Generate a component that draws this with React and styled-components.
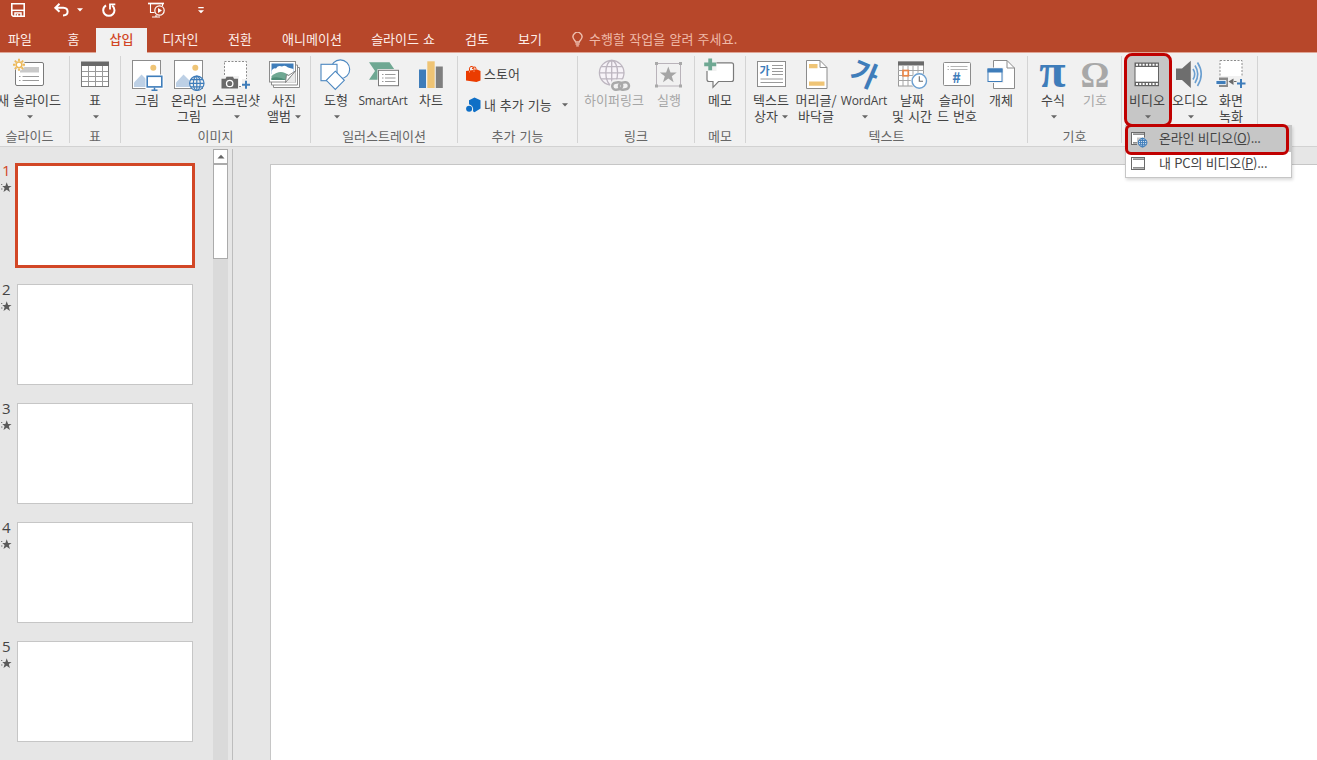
import React from 'react'
import styled, { createGlobalStyle, css } from 'styled-components'

const BLUE = '#3f7dba'
const GRAY = '#7a7a7a'
const DIM = '#a8a8a8'
const YELLOW = '#efc475'
const GREEN = '#6fa893'

/* ---------- ribbon icons, all on a 34 x 34 grid ---------- */

const Icon = ({ children }) => (
  <IconSvg width='34' height='34' viewBox='0 0 34 34' fill='none'>{children}</IconSvg>
)

const Globe = ({ x, y, r, color, bg = '#f1f1f1', w = 1.2 }) => (
  <g stroke={color} strokeWidth={w} fill='none'>
    <circle cx={x} cy={y} r={r} fill={bg} />
    <ellipse cx={x} cy={y} rx={r * 0.48} ry={r} />
    <path d={`M${x} ${y - r}V${y + r}M${x - r} ${y}H${x + r}M${x - r * 0.86} ${y - r * 0.5}H${x + r * 0.86}M${x - r * 0.86} ${y + r * 0.5}H${x + r * 0.86}`} />
  </g>
)

const NewSlideIcon = () => (
  <Icon>
    <rect x='3.5' y='4.5' width='28' height='23' rx='1.5' fill='#fff' stroke={GRAY} />
    <path d='M8 9H27V14.5H8Z' fill='#c9c9c9' />
    <path d='M7 18.5H8.5M10.5 18.5H27M7 22.5H8.5M10.5 22.5H27' stroke='#9a9a9a' />
    <circle cx='7' cy='6.8' r='6' fill='#f1f1f1' />
    <circle cx='7' cy='6.8' r='2.8' fill='#fff' stroke='#ecb95a' strokeWidth='1.4' />
    <path d='M7 .8V3.2M7 10.4V12.8M1 6.8H3.4M10.6 6.8H13M2.8 2.6L4.5 4.3M9.5 9.3L11.2 11M11.2 2.6L9.5 4.3M4.5 9.3L2.8 11' stroke='#ecb95a' strokeWidth='1.9' />
  </Icon>
)

const TableIcon = () => (
  <Icon>
    <rect x='3.5' y='4.5' width='27' height='24' fill='#fff' stroke={GRAY} />
    <path d='M3 3.5H31V8H3Z' fill='#6a6a6a' />
    <path d='M10.5 8V28M17.5 8V28M24.5 8V28M4 13.5H30M4 18.5H30M4 23.5H30' stroke='#9a9a9a' />
  </Icon>
)

const Photo = () => (
  <g>
    <rect x='2.5' y='2.5' width='28' height='28' fill='#fff' stroke='#8c8c8c' />
    <path d='M4 29V24.5L11.5 16.5L21 26V29Z' fill='#bdd0e5' />
    <circle cx='23.3' cy='9.7' r='3' fill={YELLOW} />
  </g>
)

const PictureIcon = () => (
  <Icon>
    <Photo />
    <rect x='15.5' y='16.5' width='18' height='14.5' fill='#fff' />
    <rect x='17.2' y='18.3' width='14.6' height='10.6' fill='#fff' stroke={BLUE} strokeWidth='1.6' />
    <path d='M24.5 29.5V32M21.5 32.3H27.5' stroke={BLUE} strokeWidth='1.5' />
  </Icon>
)

const OnlinePictureIcon = () => (
  <Icon>
    <Photo />
    <Globe x={24.8} y={25.3} r={7.2} color={BLUE} />
  </Icon>
)

const ScreenshotIcon = () => (
  <Icon>
    <rect x='5.5' y='3.5' width='22' height='25' fill='#fff' stroke='#8c8c8c' strokeDasharray='2 1.5' />
    <path d='M1.5 18H20V31H1.5Z' fill='#f1f1f1' />
    <path d='M23 21H33V33H23Z' fill='#f1f1f1' />
    <path d='M2.5 20.8H6.5L7.5 18.8H14L15 20.8H19V30.6H2.5Z' fill='#6a6a6a' />
    <circle cx='10.7' cy='25.5' r='3.2' fill='#6a6a6a' stroke='#fff' strokeWidth='1.3' />
    <path d='M27 22.7V30.7M23 26.7H31' stroke={BLUE} strokeWidth='2' />
  </Icon>
)

const AlbumIcon = () => (
  <Icon>
    <path d='M6.5 24V29.5H32.5V9.5H28' fill='#fff' stroke='#8c8c8c' />
    <path d='M4.5 24V27H30.5V7H28' fill='#fff' stroke='#8c8c8c' />
    <rect x='2.5' y='3.5' width='26' height='20.5' fill='#fff' stroke='#8c8c8c' />
    <path d='M4.5 5.5H26.5V16H4.5Z' fill={BLUE} />
    <path d='M4.5 13Q6 9.5 9 10.5Q11 7 15 8.5Q18 6.5 21 9.5L26.5 11V16H4.5Z' fill='#fff' />
    <path d='M4.5 22V18Q12 12 18 15L24 18V22Z' fill={GREEN} />
    <path d='M4.5 20Q12 18 19 22H4.5Z' fill='#4f8d78' />
    <path d='M19 24.5L28.5 13V24.5Z' fill='#e9e9e9' />
    <path d='M18.5 24.5L19.5 16.5L21.5 17.5L28.7 12.8Z' fill='#fff' stroke={GRAY} strokeWidth='.9' />
  </Icon>
)

const ShapesIcon = () => (
  <Icon>
    <g fill='#fff' stroke='#4b87c0' strokeWidth='1.1'>
      <circle cx='21.3' cy='11.3' r='9.4' />
      <rect x='2' y='6.3' width='16' height='16.4' />
      <path d='M16.3 13.2L25.3 22.3L16.3 31.4L7.3 22.3Z' />
    </g>
  </Icon>
)

const SmartArtIcon = () => (
  <Icon>
    <path d='M3 4.2H23.5L29.5 13L23.5 21.7H3L9 13Z' fill={GREEN} />
    <rect x='11.5' y='11' width='22' height='18' fill='#f1f1f1' />
    <rect x='12.5' y='12.3' width='20' height='15.4' fill='#fff' stroke={GRAY} />
    <path d='M16 16.5H17.5M19 16.5H29.5M16 20H17.5M19 20H29.5M16 23.5H17.5M19 23.5H29.5' stroke='#9a9a9a' />
  </Icon>
)

const ChartIcon = () => (
  <Icon>
    <path d='M5 11.5H12V30H5Z' fill={BLUE} />
    <path d='M13.3 3.3H20.7V30H13.3Z' fill={YELLOW} />
    <path d='M21.8 8.5H28.8V30H21.8Z' fill='#7f7f7f' />
  </Icon>
)

const LinkIcon = () => (
  <Icon>
    <Globe x={14.7} y={14.8} r={12.3} color='#bdb6c0' bg='#f7f3f8' w={1.3} />
    <rect x='13' y='21.5' width='21' height='12' rx='6' fill='#f1f1f1' />
    <g stroke='#a9a9a9' strokeWidth='2.5'>
      <rect x='15.2' y='24.5' width='10' height='7' rx='3.5' transform='rotate(-8 20 28)' />
      <rect x='22' y='24.5' width='10' height='7' rx='3.5' transform='rotate(-8 27 28)' />
    </g>
  </Icon>
)

const ActionIcon = () => (
  <Icon>
    <rect x='4.5' y='5.5' width='24' height='22.5' stroke='#b9b3ba' />
    <path d='M3 4H6V7H3ZM27 4H30V7H27ZM3 26.5H6V29.5H3ZM27 26.5H30V29.5H27Z' fill='#a9a9a9' />
    <path d='M16.3 8.5L18.5 14.5H24.7L19.8 18.2L21.6 24.2L16.3 20.6L11 24.2L12.8 18.2L7.9 14.5H14.1Z' fill='#a5a5a5' />
  </Icon>
)

const MemoIcon = () => (
  <Icon>
    <path d='M5.5 4.8H28.5Q30.5 4.8 30.5 6.8V21.5Q30.5 23.5 28.5 23.5H15.5L10 29.3V23.5H6Q4 23.5 4 21.5V5Z' fill='#fff' stroke={GRAY} strokeWidth='1.2' />
    <path d='M0 0H13.5V13H0Z' fill='#f1f1f1' />
    <path d='M7.2 .5V12.3M1.2 6.4H13.2' stroke={GREEN} strokeWidth='3.8' />
  </Icon>
)

const TextBoxIcon = () => (
  <Icon>
    <rect x='3.5' y='3.5' width='28' height='25' fill='#fff' stroke='#8c8c8c' />
    <Glyph x='5.5' y='16.5' $size={11} $weight={700}>가</Glyph>
    <path d='M18 7.5H29M18 10.5H29M18 13.5H29M18 16.5H29M6.5 21H29M6.5 24.5H29' stroke='#9a9a9a' />
  </Icon>
)

const HeaderIcon = () => (
  <Icon>
    <path d='M7.5 2.5H21L28 9.5V30.5H7.5Z' fill='#fff' stroke='#8c8c8c' />
    <path d='M21 2.5V9.5H28' stroke='#8c8c8c' />
    <path d='M10 6H18.5V10.3H10ZM10 23.4H25.5V27.8H10Z' fill={YELLOW} />
  </Icon>
)

const WordArtIcon = () => (
  <Icon>
    <Glyph x='17.5' y='27' $size={29} $weight={700} textAnchor='middle' transform='rotate(23 18 16)'>가</Glyph>
  </Icon>
)

const DateIcon = () => (
  <Icon>
    <rect x='3.5' y='4' width='25' height='24' fill='#fff' stroke='#9a9a9a' />
    <path d='M3 3.5H29V7.5H3Z' fill='#6a6a6a' />
    <path d='M8 8V28M13 8V28M18 8V28M23 8V28M3 12.5H29M3 17.5H29M3 22.5H29' stroke='#a5a5a5' />
    <rect x='8' y='12.5' width='5.3' height='5.3' fill='#fff' stroke='#e8874a' strokeWidth='1.7' />
    <circle cx='24.3' cy='23' r='8.6' fill='#f1f1f1' />
    <circle cx='24.3' cy='23' r='7.2' fill='#fff' stroke='#6b9fd0' strokeWidth='1.4' />
    <path d='M24.3 18.2V23.3H28' stroke='#6a6a6a' strokeWidth='1.1' />
  </Icon>
)

const NumberIcon = () => (
  <Icon>
    <rect x='3.5' y='4.5' width='27' height='23' rx='1' fill='#fff' stroke='#8c8c8c' />
    <path d='M7.5 8.5H9M10.5 8.5H27.5M7.5 11.5H9M10.5 11.5H27.5' stroke='#b5b5b5' />
    <Glyph x='12.3' y='25' $size={14.5} $weight={700}>#</Glyph>
  </Icon>
)

const ObjectIcon = () => (
  <Icon>
    <path d='M9.5 2.5H23L30.5 10V30.5H9.5Z' fill='#fff' stroke='#8c8c8c' />
    <path d='M23 2.5V10H30.5' stroke='#8c8c8c' />
    <rect x='2.5' y='9.5' width='17' height='15.5' fill='#f1f1f1' />
    <rect x='4' y='11' width='14' height='12.5' fill='#fff' stroke={BLUE} />
    <path d='M3.5 10.5H18.5V14.5H3.5Z' fill={BLUE} />
  </Icon>
)

const PiIcon = () => (
  <Icon>
    <Glyph x='16.5' y='28.5' $size={48} $weight={700} $serif textAnchor='middle'>π</Glyph>
  </Icon>
)

const OmegaIcon = () => (
  <Icon>
    <Glyph x='17' y='28.5' $size={36} $weight={700} $serif $color={DIM} textAnchor='middle'>Ω</Glyph>
  </Icon>
)

const VideoIcon = () => (
  <Icon>
    <path d='M4.5 4.5H29V28.2H4.5Z' fill='#636363' />
    <path d='M5.5 9H28V23.7H5.5Z' fill='#fff' />
    <path d='M6 6.7H28M6 26H28' stroke='#fff' strokeWidth='2' strokeDasharray='2 1.3' />
  </Icon>
)

const AudioIcon = () => (
  <Icon>
    <path d='M3 10.5H9L17.8 2.8V30L9 22H3Z' fill='#6e6e6e' />
    <path d='M20 11Q23.5 16 20 21.5M22 7.5Q27.5 16 22 25M24.5 4.5Q32 16 24.5 28' stroke='#6b9fd0' strokeWidth='1.6' />
  </Icon>
)

const RecordIcon = () => (
  <Icon>
    <rect x='6' y='2.5' width='22' height='24' fill='#fff' stroke='#8c8c8c' strokeDasharray='2 1.5' />
    <path d='M1 18H34V32H1Z' fill='#f1f1f1' />
    <path d='M5 19.5H14V29H5Z' fill='#8a8a8a' />
    <path d='M2 22.5H12V26.5H2Z' fill={BLUE} stroke='#fff' strokeWidth='.8' />
    <path d='M14.5 23.5L19.5 20.5V27Z' fill='#6a6a6a' />
    <path d='M20 23.5H22.5' stroke='#6a6a6a' />
    <path d='M27 21V30M23 25.5H31.5' stroke={BLUE} strokeWidth='2' />
  </Icon>
)

/* ---------- small icons ---------- */

const SaveIcon = () => (
  <svg width='14' height='14' viewBox='0 0 14 14' fill='none' stroke='#fff'>
    <path d='M.8 .8H13.2V13.2H2.2L.8 11.8Z' strokeWidth='1.6' />
    <path d='M1 7.3H13' strokeWidth='1.5' />
    <path d='M4 13V10H10V13' strokeWidth='1.5' />
    <path d='M6.5 11V13' strokeWidth='1.5' />
  </svg>
)

const UndoIcon = () => (
  <svg width='15' height='14' viewBox='0 0 15 14' fill='none' stroke='#fff' strokeWidth='2'>
    <path d='M5.5 .8L1.3 4.8L5.5 8.8M1.5 4.8H9.3Q13.6 5 13.6 8.8Q13.6 12.3 9 12.6' />
  </svg>
)

const RepeatIcon = () => (
  <svg width='14' height='14' viewBox='0 0 14 14' fill='none' stroke='#fff' strokeWidth='2'>
    <path d='M4 2.3Q1.2 4.2 1.2 7.2A5.6 5.6 0 0 0 12.5 7.2Q12.4 4.4 10.2 2.6' />
    <path d='M8 6.5V1.4H13.3' strokeWidth='1.8' />
  </svg>
)

const ShowIcon = () => (
  <svg width='17' height='16' viewBox='0 0 17 16' fill='none' stroke='#fff'>
    <path d='M0 1.5H16' strokeWidth='1.7' />
    <path d='M2.5 2V10.5H6.5M14.5 2V4M4 15H12M8 13V15' strokeWidth='1.1' />
    <circle cx='11.5' cy='8.5' r='4.7' strokeWidth='1.2' />
    <path d='M10 6L14 8.5L10 11Z' fill='#fff' stroke='none' />
  </svg>
)

const MoreIcon = () => (
  <svg width='6' height='7' viewBox='0 0 6 7' fill='#fff'>
    <path d='M.3 0H5.7V1.2H.3ZM0 3.2H6L3 6.2Z' />
  </svg>
)

const BulbIcon = () => (
  <svg width='11' height='15' viewBox='0 0 11 15' fill='none' stroke='#efc0b0' strokeWidth='1.4'>
    <path d='M3.6 10Q3.4 8.8 2 7.4A4.4 4.4 0 1 1 9 7.4Q7.6 8.8 7.4 10Z' />
    <path d='M3.5 12H7.5M4.2 13.9H6.8' />
  </svg>
)

const StoreIcon = () => (
  <svg width='15' height='17' viewBox='0 0 15 17' fill='none'>
    <path d='M0 6L11 4.5L14.5 6V15.5L10.5 17L0 15.5Z' fill='#eb3c00' />
    <path d='M3.5 7V3.2Q4 1 6.2 1.4Q8 1.8 8 5M6.2 4Q7 .8 9.5 2.2Q10 3 10 4.8' stroke='#eb3c00' />
    <path d='M3.5 5.8V7.5M8 5.3V7' stroke='#f6a88c' strokeWidth='.8' />
  </svg>
)

const AddinIcon = () => (
  <svg width='15' height='16' viewBox='0 0 15 16'>
    <path d='M8.5 .5L14.5 3.2V11.5L8.5 15.2L7 14.2Q8 9 3 7.3V3.2Z' fill='#0f6fc6' />
    <circle cx='3.1' cy='11.7' r='3' fill='#0f6fc6' />
  </svg>
)

const StarIcon = () => (
  <svg width='11' height='11' viewBox='0 0 11 11'>
    <path d='M5.7 .3L7.1 3.9H10.6L7.8 6.1L8.9 10L5.7 7.7L2.5 10L3.6 6.1L1.2 3.9H4.4Z' fill='#5a5a5a' />
    <path d='M0 2.5H1.3M0 7H1.5' stroke='#777' />
  </svg>
)

const FilmIcon = ({ globe }) => (
  <svg width='18' height='18' viewBox='0 0 18 18' fill='none'>
    <rect x='1.5' y='2.5' width='13' height='12' fill='#fff' stroke='#6a6a6a' />
    <path d='M3 4.2H14M3 12.8H14' stroke='#6a6a6a' strokeWidth='1.2' />
    {globe && <path d='M7 7.5H18V18H7Z' fill='#c6c6c6' />}
    {globe && <Globe x={12.6} y={12.6} r={4.3} color={BLUE} bg='#dfe9f3' w={1} />}
  </svg>
)

const Caret = ({ color = '#666' }) => (
  <svg width='6' height='4' viewBox='0 0 6 4'><path d='M0 .3H6L3 3.6Z' fill={color} /></svg>
)

/* ---------- data ---------- */

const tabs = [
  { text: '홈', w: 45 },
  { text: '삽입', w: 51, active: true },
  { text: '디자인', w: 67 },
  { text: '전환', w: 52 },
  { text: '애니메이션', w: 92 },
  { text: '슬라이드 쇼', w: 90 },
  { text: '검토', w: 58 },
  { text: '보기', w: 48 },
]

const groups = [
  { label: '슬라이드', w: 70, pad: 0, labelShift: 10, tools: [
    { icon: <NewSlideIcon />, w: 58, lines: ['새 슬라이드'], caret: true },
  ] },
  { label: '표', w: 51, pad: 4, tools: [
    { icon: <TableIcon />, w: 42, lines: ['표'], caret: true },
  ] },
  { label: '이미지', w: 190, pad: 5, tools: [
    { icon: <PictureIcon />, w: 42, lines: ['그림'] },
    { icon: <OnlinePictureIcon />, w: 42, lines: ['온라인', '그림'] },
    { icon: <ScreenshotIcon />, w: 52, lines: ['스크린샷'], caret: true },
    { icon: <AlbumIcon />, w: 44, lines: ['사진', '앨범'], caret: true },
  ] },
  { label: '일러스트레이션', w: 147, pad: 5, tools: [
    { icon: <ShapesIcon />, w: 40, lines: ['도형'], caret: true },
    { icon: <SmartArtIcon />, w: 54, lines: ['SmartArt'] },
    { icon: <ChartIcon />, w: 42, lines: ['차트'] },
  ] },
  { label: '추가 기능', w: 120, addins: true },
  { label: '링크', w: 117, pad: 4, tools: [
    { icon: <LinkIcon />, w: 64, lines: ['하이퍼링크'], off: true },
    { icon: <ActionIcon />, w: 46, lines: ['실행'], off: true },
  ] },
  { label: '메모', w: 51, pad: 4, tools: [
    { icon: <MemoIcon />, w: 42, lines: ['메모'] },
  ] },
  { label: '텍스트', w: 282, pad: 4, tools: [
    { icon: <TextBoxIcon />, w: 42, lines: ['텍스트', '상자'], caret: true },
    { icon: <HeaderIcon />, w: 48, lines: ['머리글/', '바닥글'] },
    { icon: <WordArtIcon />, w: 48, lines: ['WordArt'], caret: true },
    { icon: <DateIcon />, w: 48, lines: ['날짜', '및 시간'] },
    { icon: <NumberIcon />, w: 42, lines: ['슬라이', '드 번호'] },
    { icon: <ObjectIcon />, w: 46, lines: ['개체'] },
  ] },
  { label: '기호', w: 94, pad: 4, tools: [
    { icon: <PiIcon />, w: 42, lines: ['수식'], caret: true },
    { icon: <OmegaIcon />, w: 42, lines: ['기호'], off: true },
  ] },
  { label: '', w: 136, pad: 4, tools: [
    { icon: <VideoIcon />, w: 42, lines: ['비디오'], caret: true, open: true },
    { icon: <AudioIcon />, w: 44, lines: ['오디오'], caret: true },
    { icon: <RecordIcon />, w: 38, lines: ['화면', '녹화'] },
  ] },
]

const VideoMenu = () => (
  <Menu>
    <MenuItem $on>
      <FilmIcon globe />
      <span>온라인 비디오(<u>O</u>)...</span>
    </MenuItem>
    <MenuItem>
      <FilmIcon />
      <span>내 PC의 비디오(<u>P</u>)...</span>
    </MenuItem>
    <MenuMark />
  </Menu>
)

const RibbonTool = ({ icon, w, lines, caret, off, open }) => (
  <Tool $w={w} $off={off} $open={open}>
    {icon}
    <Line $latin={/^[A-Z]/.test(lines[0])}>{lines[0]}</Line>
    <Line $solo={!lines[1]}>
      {lines[1]}
      {caret && <Caret />}
    </Line>
    {open && <ToolMark />}
    {open && <VideoMenu />}
  </Tool>
)

const AddinTools = () => (
  <AddinList>
    <AddinRow><StoreIcon />스토어</AddinRow>
    <AddinRow><AddinIcon />내 추가 기능<Caret /></AddinRow>
  </AddinList>
)

const App = () => {
  return (
    <Window>
      <GlobalStyle />
      <TitleBar>
        <Quick $gap={29}><SaveIcon /></Quick>
        <Quick $gap={8}><UndoIcon /></Quick>
        <Quick $gap={19}><Caret color='#fff' /></Quick>
        <Quick $gap={32}><RepeatIcon /></Quick>
        <Quick $gap={33}><ShowIcon /></Quick>
        <Quick><MoreIcon /></Quick>
      </TitleBar>
      <TabBar>
        <FileTab>파일</FileTab>
        {tabs.map((tab) => (
          <Tab key={tab.text} $w={tab.w} $active={tab.active}>{tab.text}</Tab>
        ))}
        <TellMe><BulbIcon />수행할 작업을 알려 주세요.</TellMe>
      </TabBar>
      <Ribbon>
        {groups.map((group, i) => (
          <Group key={i} $w={group.w}>
            <Tools $pad={group.pad}>
              {group.addins
                ? <AddinTools />
                : group.tools.map((tool) => <RibbonTool key={tool.lines[0]} {...tool} />)}
            </Tools>
            <GroupLabel $shift={group.labelShift}>{group.label}</GroupLabel>
          </Group>
        ))}
      </Ribbon>
      <Body>
        <Slides>
          {[1, 2, 3, 4, 5].map((n) => (
            <SlideRow key={n}>
              <SlideInfo $active={n === 1}>
                <span>{n}</span>
                <StarIcon />
              </SlideInfo>
              <Thumb $active={n === 1} />
            </SlideRow>
          ))}
        </Slides>
        <ScrollBar>
          <ScrollButton>
            <svg width='8' height='5' viewBox='0 0 8 5'><path d='M.5 4.5L4 .8L7.5 4.5Z' fill='#666' /></svg>
          </ScrollButton>
          <ScrollThumb />
        </ScrollBar>
        <Editor>
          <Canvas />
        </Editor>
      </Body>
    </Window>
  )
}

const GlobalStyle = createGlobalStyle`
  * { box-sizing: border-box; }
  body {
    margin: 0;
    overflow: hidden;
    font-family: "Noto Sans CJK KR", sans-serif;
    font-size: 13px;
    word-spacing: 1px;
    color: #444;
  }
`
const Window = styled.div`
  width: 1317px;
  height: 760px;
  display: flex;
  flex-direction: column;
  overflow: hidden;
  background: #e6e6e6;
`
const TitleBar = styled.div`
  height: 28px;
  padding: 2px 0 0 11px;
  display: flex;
  background: #b7472a;
`
const Quick = styled.span`
  height: 16px;
  display: flex;
  align-items: center;
  margin-right: ${({ $gap }) => $gap || 0}px;
`
const TabBar = styled.div`
  height: 25px;
  display: flex;
  background: #b7472a;
  border-bottom: 1px solid #e0a595;
`
const Tab = styled.div`
  width: ${({ $w }) => $w}px;
  height: 25px;
  line-height: 21px;
  text-align: center;
  white-space: nowrap;
  color: #fdeee9;
  ${({ $active }) => $active && css`
    background: #f1f1f1;
    color: #d24726;
    font-weight: 500;
  `}
`
const FileTab = styled(Tab)`
  width: 40px;
  margin-right: 11px;
`
const TellMe = styled.div`
  height: 22px;
  margin-left: 18px;
  display: flex;
  align-items: center;
  gap: 6px;
  line-height: 20px;
  letter-spacing: 0.1px;
  color: #efb9a8;
`
const Ribbon = styled.div`
  height: 94px;
  flex: none;
  display: flex;
  background: #f1f1f1;
  border-bottom: 1px solid #d2d2d2;
`
const Group = styled.div`
  width: ${({ $w }) => $w}px;
  height: 87px;
  margin-top: 3px;
  flex: none;
  display: flex;
  flex-direction: column;
  border-right: 1px solid #d4d4d4;
`
const Tools = styled.div`
  height: 72px;
  flex: none;
  padding-left: ${({ $pad }) => $pad || 0}px;
  display: flex;
`
const Tool = styled.div`
  position: relative;
  width: ${({ $w }) => $w}px;
  height: 69px;
  padding-top: 2px;
  flex: none;
  display: flex;
  flex-direction: column;
  align-items: center;
  color: ${({ $off }) => ($off ? '#a6a6a6' : '#444')};
  background: ${({ $open }) => ($open ? '#c6c6c6' : 'transparent')};
`
const IconSvg = styled.svg`
  flex: none;
  overflow: visible;
`
const Glyph = styled.text`
  fill: ${({ $color }) => $color || BLUE};
  font-family: ${({ $serif }) => ($serif ? '"Liberation Serif", serif' : '"Noto Sans CJK KR", sans-serif')};
  font-size: ${({ $size }) => $size}px;
  font-weight: ${({ $weight }) => $weight};
`
const Line = styled.div`
  height: 16px;
  line-height: 16px;
  display: flex;
  align-items: center;
  gap: 4px;
  white-space: nowrap;
  svg {
    margin-top: 1px;
  }
  ${({ $solo }) => $solo && css`
    padding-left: 2px;
  `}
  ${({ $latin }) => $latin && css`
    padding-top: 2px;
    font-family: "Open Sans", sans-serif;
    font-size: 12px;
    letter-spacing: -0.15px;
  `}
`
const GroupLabel = styled.div`
  height: 15px;
  line-height: 15px;
  padding-right: ${({ $shift }) => $shift || 0}px;
  text-align: center;
  white-space: nowrap;
  color: #666;
`
const AddinList = styled.div`
  padding: 2px 0 0 8px;
`
const AddinRow = styled.div`
  height: 31px;
  display: flex;
  align-items: center;
  gap: 3px;
  white-space: nowrap;
  svg:last-child:not(:first-child) {
    margin-left: 7px;
  }
`
const ToolMark = styled.div`
  position: absolute;
  z-index: 2;
  top: -3px;
  left: -2px;
  width: 48px;
  height: 74px;
  border: 3px solid #c00000;
  border-radius: 8px;
  box-shadow: inset -2px 0 #c6c6c6;
`
const Menu = styled.div`
  position: absolute;
  z-index: 3;
  top: 69px;
  left: -1px;
  width: 167px;
  height: 53px;
  background: #fff;
  border: 1px solid #c6c6c6;
  box-shadow: 1px 2px 3px rgba(0, 0, 0, .15);
`
const MenuItem = styled.div`
  height: ${({ $on }) => ($on ? 26 : 23)}px;
  padding-left: 4px;
  display: flex;
  align-items: center;
  gap: 11px;
  white-space: nowrap;
  line-height: 16px;
  letter-spacing: -0.25px;
  background: ${({ $on }) => ($on ? '#c6c6c6' : '#fff')};
  span {
    margin-bottom: 2px;
  }
`
const MenuMark = styled.div`
  position: absolute;
  top: -2px;
  left: -1px;
  width: 164px;
  height: 31px;
  border: 3px solid #c00000;
  border-radius: 6px;
`
const Body = styled.div`
  flex: 1;
  display: flex;
  padding-top: 2px;
`
const Slides = styled.div`
  width: 213px;
  padding-top: 14px;
`
const SlideRow = styled.div`
  height: 119px;
  display: flex;
`
const SlideInfo = styled.div`
  width: 15px;
  flex: none;
  padding: 0 0 0 1px;
  font-family: "Open Sans", sans-serif;
  font-size: 15px;
  line-height: 15px;
  color: ${({ $active }) => ($active ? '#d24726' : '#444')};
  span {
    display: block;
    padding-left: 1px;
  }
  svg {
    display: block;
    margin-top: 4px;
  }
`
const Thumb = styled.div`
  width: 176px;
  height: 101px;
  margin: 2px 0 0 2px;
  background: #fff;
  border: 1px solid #c6c6c6;
  ${({ $active }) => $active && css`
    width: 180px;
    height: 105px;
    margin: 0;
    border: 3px solid #d24726;
  `}
`
const ScrollBar = styled.div`
  width: 15px;
  background: #dadada;
`
const ScrollButton = styled.div`
  height: 15px;
  display: flex;
  align-items: center;
  justify-content: center;
  background: #fff;
  border: 1px solid #ababab;
`
const ScrollThumb = styled.div`
  height: 95px;
  background: #fff;
  border: 1px solid #ababab;
`
const Editor = styled.div`
  flex: 1;
  margin-left: 4px;
  padding: 15px 0 0 37px;
  display: flex;
  border-left: 1px solid #bdbdbd;
`
const Canvas = styled.div`
  flex: 1;
  background: #fff;
  border: solid #c6c6c6;
  border-width: 1px 0 0 1px;
`
export default App
